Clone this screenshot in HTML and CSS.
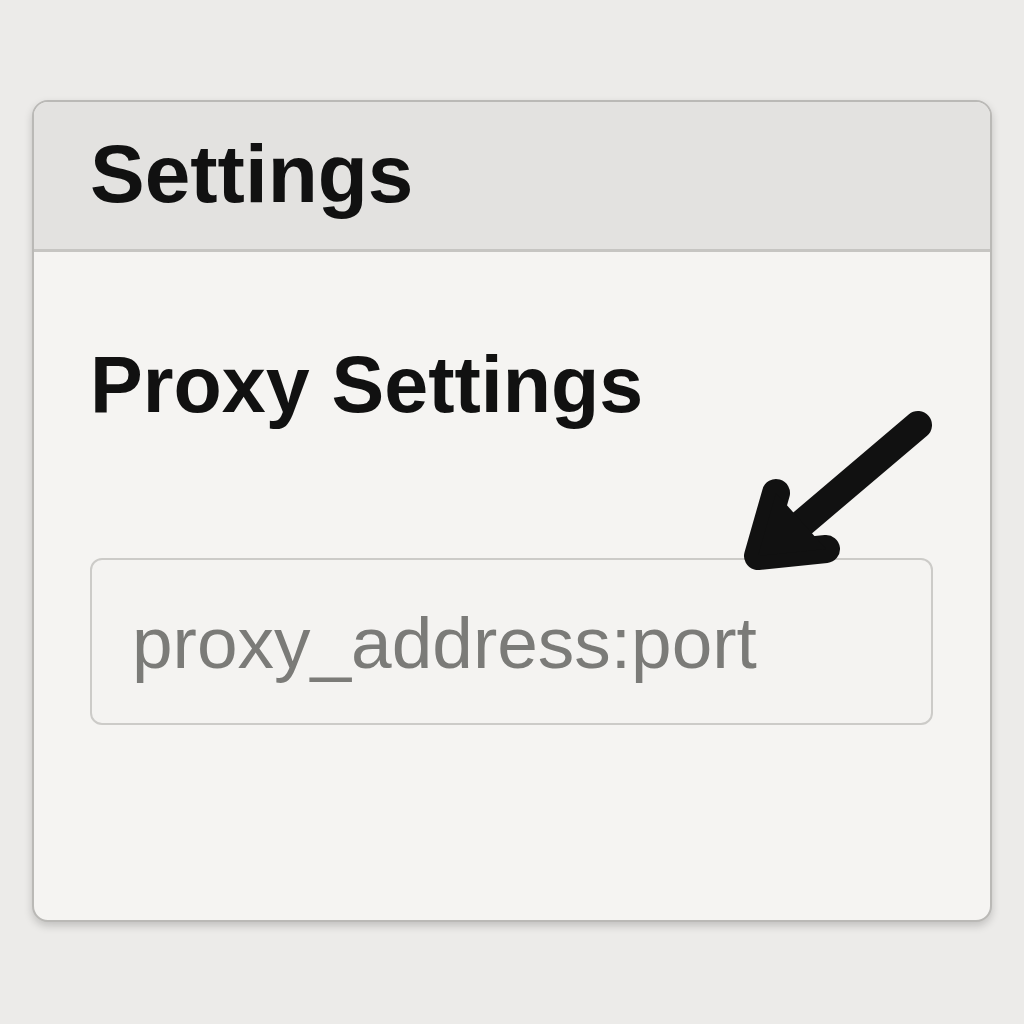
FILE: index.html
```html
<!DOCTYPE html>
<html lang="en">
<head>
<meta charset="utf-8">
<title>Settings</title>
<link rel="stylesheet" href="styles.css">
</head>
<body>
  <div class="card">
    <div class="card-header">
      <h1 class="title">Settings</h1>
    </div>
    <div class="card-body">
      <h2 class="section-title">Proxy Settings</h2>
      <input class="proxy-input" type="text" placeholder="proxy_address:port">
    </div>
    <svg class="arrow" viewBox="32 100 960 822" width="960" height="822" aria-hidden="true">
      <g fill="none" stroke="#111" stroke-width="28" stroke-linecap="round" stroke-linejoin="round">
        <path d="M918 425 L766 554"/>
        <path d="M776 493 L758 556 L826 549"/>
      </g>
      <path d="M776 493 L758 556 L826 549 Z" fill="#111"/>
    </svg>
  </div>
</body>
</html>
```

FILE: styles.css
```css
html, body {
  margin: 0;
  padding: 0;
}

body {
  background: #ecebe9;
  font-family: "Liberation Sans", Arial, sans-serif;
  padding: 100px 32px 0 32px;
  height: 1024px;
  box-sizing: border-box;
}

.card {
  position: relative;
  width: 960px;
  height: 822px;
  box-sizing: border-box;
  background: #f5f4f2;
  border: 2px solid #bab9b6;
  border-radius: 16px;
  box-shadow: 0 4px 8px rgba(0, 0, 0, 0.18);
  overflow: hidden;
}

.card-header {
  background: #e3e2e0;
  border-bottom: 3px solid #c6c5c2;
  height: 150px;
  box-sizing: border-box;
  padding: 31px 56px 0 56px;
}

.title {
  margin: 0;
  font-size: 82px;
  line-height: 1;
  font-weight: 700;
  color: #111;
}

.card-body {
  padding: 93px 57px 0 56px;
  display: flex;
  flex-direction: column;
}

.section-title {
  margin: 0;
  font-size: 79px;
  line-height: 1;
  font-weight: 700;
  color: #111;
}

.proxy-input {
  margin-top: 134px;
  width: 843px;
  height: 167px;
  box-sizing: border-box;
  border: 2px solid #cccbc8;
  border-radius: 12px;
  background: #f4f3f1;
  padding: 2px 40px 0 40px;
  font-family: "Liberation Sans", Arial, sans-serif;
  font-size: 73px;
  color: #444;
  outline: none;
}

.proxy-input::placeholder {
  color: #7b7b78;
  opacity: 1;
}

.arrow {
  position: absolute;
  left: -2px;
  top: -2px;
}
```
